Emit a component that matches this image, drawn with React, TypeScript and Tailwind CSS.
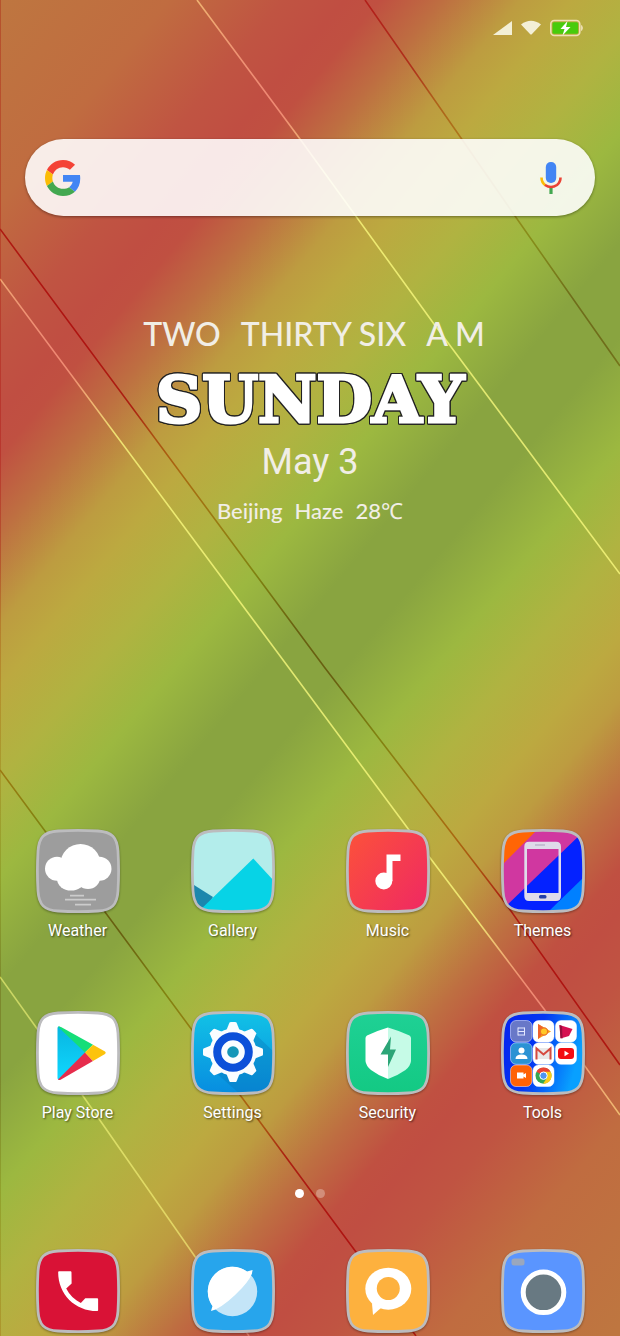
import type { ReactNode } from "react";

const TILE =
  "M22 2Q42 .8 62 2C76 3 81 8 82 22Q83.2 42 82 62C81 76 76 81 62 82Q42 83.2 22 82C8 81 3 76 2 62Q.8 42 2 22C3 8 8 3 22 2Z";

function Wallpaper() {
  const stops: [number, string][] = [
    [0, "#be7640"],
    [130, "#c06c40"],
    [218, "#c05442"],
    [265, "#c04e42"],
    [292, "#c05041"],
    [340, "#be6e41"],
    [400, "#bd9c40"],
    [440, "#bca940"],
    [500, "#b0b341"],
    [562, "#9cb840"],
    [632, "#89a440"],
    [692, "#89a440"],
    [762, "#9cb840"],
    [824, "#b0b341"],
    [884, "#bca940"],
    [924, "#bd9c40"],
    [984, "#be6e41"],
    [1032, "#c05041"],
    [1059, "#c04e42"],
    [1106, "#c05442"],
    [1194, "#c06c40"],
    [1324, "#be7640"],
  ];
  return (
    <svg
      className="absolute inset-0 -z-10 h-full w-full"
      viewBox="0 0 620 1336"
      preserveAspectRatio="none"
      fill="none"
      aria-hidden="true"
    >
      <defs>
        <linearGradient id="sky" gradientUnits="userSpaceOnUse" x1="0" y1="0" x2="1017" y2="847">
          {stops.map(([at, color]) => (
            <stop key={at} offset={at / 1324} stopColor={color} />
          ))}
        </linearGradient>
      </defs>
      <rect width="620" height="1336" fill="url(#sky)" />
      <g stroke="#fff" strokeWidth="1.6" opacity=".75" className="mix-blend-overlay">
        <path d="M197 0 300 139 434 324 620 574" />
        <path d="M0 279 289 668 409 830 544 1009 620 1115" />
        <path d="M0 977 38 1030 83 1096 196 1258 249 1336" strokeOpacity=".75" />
      </g>
      <g stroke="#500000" strokeWidth="1.6" opacity=".75" className="mix-blend-overlay">
        <path d="M365 0 461 138 515 216 620 366" strokeOpacity=".8" />
        <path d="M0 229 325 668 506 904 620 1065" />
        <path d="M0 770 45 831 105 912 192 1030 356 1252 416 1336" />
        <path d="M.5 0V1336" strokeOpacity=".4" strokeWidth="1" />
      </g>
    </svg>
  );
}

function StatusBar() {
  return (
    <header className="flex h-14 items-center justify-end gap-2 pr-9">
      <svg width="20" height="16" viewBox="0 0 20 16" role="img" aria-label="Signal">
        <path d="M0 15 19 1v14Z" fill="#f3efd6" />
      </svg>
      <svg width="20" height="16" viewBox="0 0 20 16" role="img" aria-label="Wi-Fi">
        <path d="M0 4.500Q10-3 20 4.500L11 14q-1 1-2 0Z" fill="#f3efd6" />
      </svg>
      <svg width="35" height="18" viewBox="0 0 35 18" role="img" aria-label="Battery charging">
        <rect x="1.800" y="1.500" width="29" height="15" rx="3.500" fill="none" stroke="#eedfb4" strokeWidth="1.600" />
        <rect x="3.500" y="3.200" width="25.600" height="11.600" rx="1.500" fill="#48cb0c" />
        <path d="M32.600 6.500q1.600 2.500 0 5Z" fill="#eedfb4" stroke="#eedfb4" />
        <path d="M18.500 2 11.500 10h4l-2 6.500 8-8.500h-4.500Z" fill="#fff" />
      </svg>
    </header>
  );
}

function GoogleMark() {
  return (
    <svg className="shrink-0" width="36" height="36" viewBox="0 0 48 48" aria-hidden="true">
      <path fill="#f44336" d="M24 9.500c3.540 0 6.710 1.220 9.210 3.600l6.850-6.850C35.900 2.380 30.470 0 24 0 14.620 0 6.510 5.380 2.560 13.220l7.980 6.190C12.430 13.720 17.740 9.500 24 9.500z" />
      <path fill="#4285f4" d="M46.980 24.550c0-1.570-.15-3.090-.38-4.550H24v9.020h12.940c-.58 2.960-2.260 5.480-4.780 7.180l7.730 6c4.510-4.180 7.090-10.360 7.090-17.650z" />
      <path fill="#fbbc05" d="M10.530 28.590c-.48-1.450-.76-2.990-.76-4.590s.27-3.140.76-4.590l-7.980-6.190C.92 16.460 0 20.120 0 24c0 3.880.92 7.540 2.560 10.780l7.970-6.190z" />
      <path fill="#43a850" d="M24 48c6.480 0 11.930-2.130 15.890-5.810l-7.730-6c-2.150 1.450-4.920 2.300-8.160 2.300-6.260 0-11.570-4.220-13.470-9.910l-7.980 6.190C6.510 42.620 14.620 48 24 48z" />
    </svg>
  );
}

function SearchBar() {
  return (
    <form
      role="search"
      className="mx-[25px] mt-[83px] flex h-[77px] items-center rounded-full bg-white/88 pr-8 pl-5 shadow-[0_1px_3px_rgba(0,0,0,0.4)]"
    >
      <GoogleMark />
      <input type="search" aria-label="Search" className="mx-4 h-12 min-w-0 flex-1 bg-transparent font-[Roboto,sans-serif] text-xl text-gray-800 outline-none" />
      <button type="button" aria-label="Voice search" className="shrink-0">
        <svg width="24" height="36" viewBox="0 0 24 36" fill="none" aria-hidden="true">
          <rect x="6.800" y="2" width="10.400" height="21" rx="5" fill="#4285f4" />
          <path d="M12 26v8" stroke="#43a850" strokeWidth="3.200" />
          <path d="M2.500 17.500a9.500 9.500 0 0 0 4 7.800" stroke="#fbbc05" strokeWidth="2.600" />
          <path d="M6 25Q12 29 18 25A9.500 9.500 0 0 0 21.500 17.500" stroke="#ea4335" strokeWidth="2.600" />
        </svg>
      </button>
    </form>
  );
}

function Clock() {
  return (
    <section className="mt-[98px] flex flex-col items-center text-[#f1eee6]" aria-label="Clock and weather">
      <p className="flex h-10 items-center gap-5 pl-2 font-[Lato,sans-serif] text-[32px] font-medium">
        <span>TWO</span>
        <span>THIRTY SIX</span>
        <span>A M</span>
      </p>
      <h1 className="mt-2.5 h-[72px] font-['DejaVu_Serif',serif] text-[64px] leading-[72px] font-bold text-white [-webkit-text-stroke:3px_#fff] [stroke-linejoin:round] [filter:drop-shadow(1px_0_#222)_drop-shadow(-1px_0_#222)_drop-shadow(0_1px_#222)_drop-shadow(0_-1px_#222)]">
        SUNDAY
      </h1>
      <p className="mt-0.5 h-12 font-[Roboto,sans-serif] text-[36px] leading-[48px]">May 3</p>
      <p className="mt-2 flex h-8 items-center gap-3 font-[Lato,sans-serif] text-[22px] font-medium">
        <span>Beijing</span>
        <span>Haze</span>
        <span>28℃</span>
      </p>
    </section>
  );
}

type App = { name: string; art: ReactNode };

const apps: App[] = [
  {
    name: "Weather",
    art: (
      <>
        <rect width="84" height="84" fill="#9d9d9d" />
        <g fill="#fff">
          <circle cx="44.500" cy="35" r="20" />
          <circle cx="21" cy="39.700" r="12" />
          <circle cx="63.500" cy="39.700" r="12" />
          <ellipse cx="35" cy="50" rx="14" ry="11.500" />
          <ellipse cx="52" cy="49" rx="12" ry="11" />
        </g>
        <path d="M34 66.700h14M29 70.700h31M39 75.700h16" stroke="#ccc" strokeWidth="1.800" />
      </>
    ),
  },
  {
    name: "Gallery",
    art: (
      <>
        <rect width="84" height="84" fill="#b3edeb" />
        <path d="M0 54 22 68 12 84H0Z" fill="#1c87ad" />
        <path d="M62.300 29.500 84 53V84H6Z" fill="#07d3e6" />
      </>
    ),
  },
  {
    name: "Music",
    art: (
      <>
        <defs>
          <linearGradient id="music" x2="1" y2=".8">
            <stop stopColor="#fc5339" />
            <stop offset="1" stopColor="#f02b60" />
          </linearGradient>
        </defs>
        <rect width="84" height="84" fill="url(#music)" />
        <circle cx="37.800" cy="52" r="8.500" fill="#fff" />
        <path d="M40.500 25.500H54.500V32H46.500V52H40.500Z" fill="#fff" />
      </>
    ),
  },
  {
    name: "Themes",
    art: (
      <>
        <rect width="84" height="84" fill="#0080ff" />
        <path d="M0 0H84V47L46 84H0Z" fill="#0422ff" />
        <path d="M0 0H84V1L0 82Z" fill="#d037a0" />
        <path d="M0 0H37L0 37Z" fill="#ff6505" />
        <path
          fillRule="evenodd"
          d="M28 12.700H55Q60 12.700 60 17.700V67Q60 72 55 72H28Q23.300 72 23.300 67V17.700Q23.300 12.700 28 12.700ZM26 20V64H57.500V20Z"
          fill="#dfdbea"
        />
        <rect x="38" y="66" width="7.500" height="3.500" rx="1.500" fill="#243ea8" />
        <path d="M34 16h10" stroke="#aaa3bd" />
      </>
    ),
  },
  {
    name: "Play Store",
    art: (
      <>
        <defs>
          <linearGradient id="play" x2="0" y2="1">
            <stop stopColor="#08b5e0" />
            <stop offset="1" stopColor="#10d8ff" />
          </linearGradient>
        </defs>
        <rect width="84" height="84" fill="#fff" />
        <path d="M21.500 17V67Q21.500 69 23.500 68.500L50 41.500 23.500 15.500Q21.500 15 21.500 17Z" fill="url(#play)" />
        <path d="M22 15.800Q23 15 25 16L57 33.700 49 41.500Z" fill="#15de78" />
        <path d="M22 68.500Q23 69.500 25 68.500L57 50 49 41.500Z" fill="#e62c4c" />
        <path d="M57 33.700 69 40.500Q70.500 41.800 69 43L57 50 49 41.500Z" fill="#fcc30d" />
      </>
    ),
  },
  {
    name: "Settings",
    art: (
      <>
        <defs>
          <linearGradient id="settings" x2="0" y2="1">
            <stop stopColor="#12c3e6" />
            <stop offset="1" stopColor="#078ce0" />
          </linearGradient>
        </defs>
        <rect width="84" height="84" fill="url(#settings)" />
        <path d="M61 20 84 42V84H50L24 61Z" fill="#0874b4" opacity=".35" />
        <g fill="#fafdff">
          <circle cx="42" cy="41" r="23.500" />
          {[0, 45, 90, 135, 180, 225, 270, 315].map((angle) => (
            <path key={angle} d="M35.500 19 38.500 11.500Q39 11 40 11H44Q45 11 45.500 11.500L48.500 19Z" transform={`rotate(${angle} 42 41)`} />
          ))}
        </g>
        <circle cx="42" cy="41" r="15.800" fill="none" stroke="#0c50d9" strokeWidth="8" />
        <circle cx="42" cy="41" r="5.800" fill="#1496b8" />
      </>
    ),
  },
  {
    name: "Security",
    art: (
      <>
        <defs>
          <linearGradient id="security" x2="0" y2="1">
            <stop stopColor="#1fd195" />
            <stop offset="1" stopColor="#13c983" />
          </linearGradient>
        </defs>
        <rect width="84" height="84" fill="url(#security)" />
        <path d="M42 16.500Q30 20 21 24.500Q19.500 25.500 19.500 27V50Q20 55 25 59 33 65 42 68Z" fill="#fff" />
        <path d="M42 16.500Q54 20 63.500 24.500Q65 25.500 65 27V50Q64.500 55 59.500 59 51 65 42 68Z" fill="#c6fbe7" />
        <path d="M45 25.500 34.500 43.500H42V56L50 38.500H44Z" fill="#2ca577" />
      </>
    ),
  },
  {
    name: "Tools",
    art: (
      <>
        <defs>
          <linearGradient id="tools" x2="1" y2=".3">
            <stop stopColor="#0420ee" />
            <stop offset=".5" stopColor="#0438f2" />
            <stop offset="1" stopColor="#08a0ff" />
          </linearGradient>
        </defs>
        <rect width="84" height="84" fill="url(#tools)" />
        <g stroke="#fff" strokeOpacity=".6" strokeWidth=".8">
          <rect x="9.500" y="9.500" width="21.500" height="21.500" rx="5.500" fill="#6878c8" />
          <rect x="9.500" y="31.800" width="21.500" height="21.500" rx="5.500" fill="#2b92d4" />
          <rect x="9.500" y="54" width="21.500" height="21.500" rx="5.500" fill="#ff6206" />
          <rect x="32" y="9.500" width="21" height="21.500" rx="5.500" fill="#fff" />
          <rect x="32" y="31.800" width="21" height="21.500" rx="5.500" fill="#fff" />
          <rect x="32" y="54" width="21" height="21.500" rx="5.500" fill="#fff" />
          <rect x="54.500" y="9.500" width="21" height="21.500" rx="5.500" fill="#fff" />
          <rect x="54.500" y="31.800" width="21" height="21.500" rx="5.500" fill="#fff" />
        </g>
        <path d="M17 16.500v8M23.500 16.500v8M17 17h6.500M17 20.500h6.500M17 24h6.500" stroke="#e4e8ff" />
        <path d="M37 13 50 20.500 37 28Z" fill="#f8a018" />
        <path d="M37 13 42 16 40 25 37 28Z" fill="#f0622c" />
        <circle cx="43" cy="20.500" r="3.600" fill="#ffc828" stroke="#ed7325" strokeWidth="1.200" />
        <path d="M58.500 14 71.500 18 68 25 59.500 27.500Z" fill="#d60f50" />
        <path d="M58.500 14 61 15 61.500 27.500 59.500 27Z" fill="#960d3d" />
        <circle cx="20.500" cy="39.500" r="3" fill="#fff" />
        <path d="M14.500 48Q14.500 43.500 20.500 43.500T26.500 48Z" fill="#fff" />
        <path d="M34.500 37H50.500V48H34.500Z" fill="#e9e8e8" />
        <path d="M35.500 48.500V37.500L42.500 43.500 49.500 37.500V48.500" fill="none" stroke="#d64a40" strokeWidth="2" />
        <rect x="57" y="37" width="16" height="11" rx="3" fill="#f30d12" />
        <path d="M63.500 39.800 68 42.500 63.500 45.200Z" fill="#fff" />
        <path d="M16 61.500h6.500v2l2.500-1.500v5l-2.500-1.500v2H16Z" fill="#fff" />
        <circle cx="42.500" cy="64.700" r="8" fill="#34a853" />
        <path d="M42.500 64.700 35.500 60.700A8 8 0 0 1 49.500 60.700Z" fill="#ea4335" />
        <path d="M42.500 60.700H49.500A8 8 0 0 1 42 72.700L46 66.700Z" fill="#fbcb18" />
        <circle cx="42.500" cy="64.700" r="3.700" fill="#4e94f2" stroke="#fff" />
      </>
    ),
  },
];

const dock: App[] = [
  {
    name: "Phone",
    art: (
      <>
        <rect width="84" height="84" fill="#d91236" />
        <path
          transform="translate(15.500 15.500) scale(2.220)"
          d="M6.620 10.790c1.440 2.830 3.760 5.140 6.590 6.590l2-2.200h5.290c.3 0 .5.200.5.500V20.500c0 .3-.2.500-.5.500C10.600 21 3 13.400 3 3.500c0-.3.200-.5.500-.5h5c.3 0 .5.200.5.500L9.070 8.570z"
          fill="#fff"
        />
      </>
    ),
  },
  {
    name: "Browser",
    art: (
      <>
        <rect width="84" height="84" fill="#27a5ec" />
        <circle cx="41.500" cy="42.500" r="24.700" fill="#c4e5f8" />
        <path d="M20 62 21.500 57A24.700 24.700 0 0 1 56 22.500L61.500 21Q62 27 51 39 36 55 24.500 60.500Z" fill="#fff" />
      </>
    ),
  },
  {
    name: "Messages",
    art: (
      <>
        <rect width="84" height="84" fill="#fdb13e" />
        <path d="M27 66 26 54.500H40Z" fill="#fff" />
        <ellipse cx="42.300" cy="39.700" rx="23" ry="21" fill="#fff" />
        <circle cx="42.300" cy="39.500" r="11.500" fill="#fdb13e" />
      </>
    ),
  },
  {
    name: "Camera",
    art: (
      <>
        <rect width="84" height="84" fill="#5a95ff" />
        <rect x="10.500" y="9.500" width="13" height="7" rx="2.500" fill="#9aa7bd" />
        <circle cx="42.500" cy="43.300" r="20.300" fill="#687982" stroke="#fff" strokeWidth="5" />
      </>
    ),
  },
];

function AppIcon({ app, labelled = true }: { app: App; labelled?: boolean }) {
  const clip = `tile-${app.name.replace(" ", "-")}`;
  return (
    <button type="button" aria-label={app.name} className="flex flex-col items-center gap-1.5">
      <svg width="84" height="84" viewBox="0 0 84 84" aria-hidden="true" className="drop-shadow-[0_1px_1px_rgba(0,0,0,0.35)]">
        <clipPath id={clip}>
          <path d={TILE} />
        </clipPath>
        <g clipPath={`url(#${clip})`}>{app.art}</g>
        <path d={TILE} fill="none" stroke="#bcbcbe" strokeWidth="2.800" />
      </svg>
      {labelled && (
        <span className="font-[Roboto,sans-serif] text-base leading-6 text-white [text-shadow:1px_1px_2px_rgba(0,0,0,0.6)]">{app.name}</span>
      )}
    </button>
  );
}

export default function App() {
  return (
    <main className="relative isolate flex min-h-screen flex-col overflow-hidden">
      <Wallpaper />
      <StatusBar />
      <SearchBar />
      <Clock />
      <nav aria-label="Apps" className="mt-auto grid grid-cols-4 gap-y-[68px] pt-12">
        {apps.map((app) => (
          <AppIcon key={app.name} app={app} />
        ))}
      </nav>
      <div className="mt-16 flex items-center justify-center gap-3" aria-label="Page 1 of 2">
        <span className="size-[9px] rounded-full bg-white" />
        <span className="size-[9px] rounded-full bg-white/30" />
      </div>
      <nav aria-label="Dock" className="mt-[51px] grid grid-cols-4 pb-[3px]">
        {dock.map((app) => (
          <AppIcon key={app.name} app={app} labelled={false} />
        ))}
      </nav>
    </main>
  );
}
